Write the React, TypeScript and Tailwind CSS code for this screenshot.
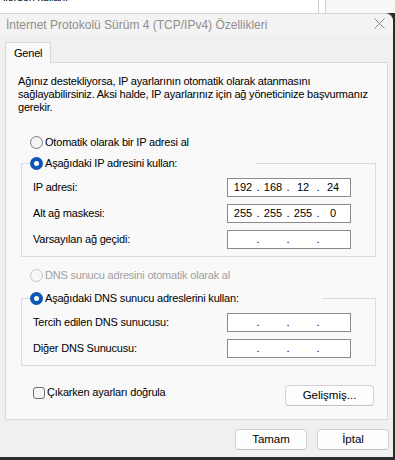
import React from 'react';

function Radio({ checked, disabled }: { checked?: boolean; disabled?: boolean }) {
  if (checked) {
    return (
      <span className="w-[13px] h-[13px] rounded-full bg-[#0c57b3] flex items-center justify-center shrink-0">
        <span className="w-[5px] h-[5px] rounded-full bg-white" />
      </span>
    );
  }
  return (
    <span
      className={
        disabled
          ? 'w-[13px] h-[13px] rounded-full border border-[#c6c6c6] bg-[#f7f7f7] shrink-0'
          : 'w-[13px] h-[13px] rounded-full border border-[#7a7a7a] bg-[#f3f3f3] shrink-0'
      }
    />
  );
}

function IpField({ parts }: { parts?: string[] }) {
  const p = parts ?? ['', '', '', ''];
  return (
    <div className="w-[124px] h-[19px] border border-[#8a8a8a] bg-white flex items-center pl-[2px] text-[11px] tracking-normal text-black">
      {p.map((v, i) => (
        <React.Fragment key={i}>
          {i > 0 && <span className="w-[4px] text-center">.</span>}
          <span className="w-[26px] text-center">{v}</span>
        </React.Fragment>
      ))}
    </div>
  );
}

function Row({ label, parts }: { label: string; parts?: string[] }) {
  return (
    <div className="flex items-center h-[19px] pl-[11px] pr-[24px]">
      <span className="flex-1">{label}</span>
      <IpField parts={parts} />
    </div>
  );
}

function Button({ children, wide }: { children: React.ReactNode; wide?: boolean }) {
  return (
    <button
      className={
        (wide ? 'w-[89px] ' : 'w-[72px] ') +
        'h-[21px] rounded-[4px] border border-[#d2d2d2] border-b-[#c0c0c0] bg-[#fdfdfd] text-[11.5px] tracking-normal text-black flex items-center justify-center'
      }
    >
      {children}
    </button>
  );
}

export default function App() {
  return (
    <div className="w-[395px] h-[460px] overflow-hidden bg-[#2c2c2c] font-['Liberation_Sans',Arial,sans-serif] text-[11px] leading-[13px] tracking-[-0.2px] text-black">
      {/* window behind */}
      <div className="h-[13px] bg-white flex overflow-hidden">
        <div className="w-[318px] pl-[3px]">
          <span className="block -mt-[9px] whitespace-nowrap">ilerden kullan:</span>
        </div>
        <div className="w-px bg-[#cfcfcf]" />
        <div className="w-[6px]" />
        <div className="w-px bg-[#cfcfcf]" />
        <div className="flex-1 bg-[#f7f7f7]" />
      </div>

      {/* dialog */}
      <div className="w-[393px] h-[444px] bg-[#f0f0f0] rounded-tr-[8px] border-t border-[#d6d6d6] flex flex-col">
        <div className="h-[21px] bg-[#f3f3f3] rounded-tr-[8px] flex items-center pl-[6px] pr-[6px]">
          <span className="text-[12px] tracking-normal text-[#8f8f8f] whitespace-nowrap flex-1 mt-[1px]">
            İnternet Protokolü Sürüm 4 (TCP/IPv4) Özellikleri
          </span>
          <svg width="11" height="11" viewBox="0 0 11 11" className="-mt-[3px] mr-[2px]">
            <path d="M0.5 0.5 L10.5 10.5 M10.5 0.5 L0.5 10.5" stroke="#8a8a8a" strokeWidth="1" fill="none" />
          </svg>
        </div>

        <div className="pt-[7px] px-[5px]">
          <div className="flex">
            <div className="relative z-10 -mb-px h-[21px] w-[46px] border border-b-0 border-[#d9d9d9] bg-[#f9f9f9] pl-[8px] flex items-center">
              Genel
            </div>
          </div>

          <div className="border border-[#d9d9d9] bg-[#f9f9f9] pb-[13px]">
            <p className="pt-[12px] pl-[12px] whitespace-nowrap">
              Ağınız destekliyorsa, IP ayarlarının otomatik olarak atanmasını
              <br />
              sağlayabilirsiniz. Aksi halde, IP ayarlarınız için ağ yöneticinize başvurmanız
              <br />
              gerekir.
            </p>

            <div className="mt-[22px] pl-[24px] flex items-center h-[13px]">
              <Radio />
              <span className="ml-[2px]">Otomatik olarak bir IP adresi al</span>
            </div>

            <fieldset className="mt-[8px] ml-[15px] mr-[11px] border border-[#dcdcdc] pb-[7px]">
              <legend className="ml-[8px] w-[226px] h-[13px] flex items-center">
                <Radio checked />
                <span className="ml-[2px]">Aşağıdaki IP adresini kullan:</span>
              </legend>
              <div className="pt-[8px] flex flex-col gap-[7px]">
                <Row label="IP adresi:" parts={['192', '168', '12', '24']} />
                <Row label="Alt ağ maskesi:" parts={['255', '255', '255', '0']} />
                <Row label="Varsayılan ağ geçidi:" />
              </div>
            </fieldset>

            <div className="mt-[12px] pl-[24px] flex items-center h-[13px] text-[#a0a0a0]">
              <Radio disabled />
              <span className="ml-[2px]">DNS sunucu adresini otomatik olarak al</span>
            </div>

            <fieldset className="mt-[10px] ml-[15px] mr-[11px] border border-[#dcdcdc] pb-[7px]">
              <legend className="ml-[8px] w-[292px] h-[13px] flex items-center">
                <Radio checked />
                <span className="ml-[2px]">Aşağıdaki DNS sunucu adreslerini kullan:</span>
              </legend>
              <div className="pt-[8px] flex flex-col gap-[7px]">
                <Row label="Tercih edilen DNS sunucusu:" />
                <Row label="Diğer DNS Sunucusu:" />
              </div>
            </fieldset>

            <div className="mt-[19px] pl-[27px] pr-[13px] flex items-start justify-between">
              <div className="flex items-center h-[13px] mt-[1px]">
                <span className="w-[12px] h-[12px] rounded-[3px] border border-[#6e6e6e] bg-[#f5f5f5] shrink-0" />
                <span className="ml-[2px]">Çıkarken ayarları doğrula</span>
              </div>
              <Button wide>Gelişmiş...</Button>
            </div>
          </div>
        </div>

        <div className="mt-[9px] pr-[4px] flex justify-end gap-[10px]">
          <Button>Tamam</Button>
          <Button>İptal</Button>
        </div>
      </div>
    </div>
  );
}
